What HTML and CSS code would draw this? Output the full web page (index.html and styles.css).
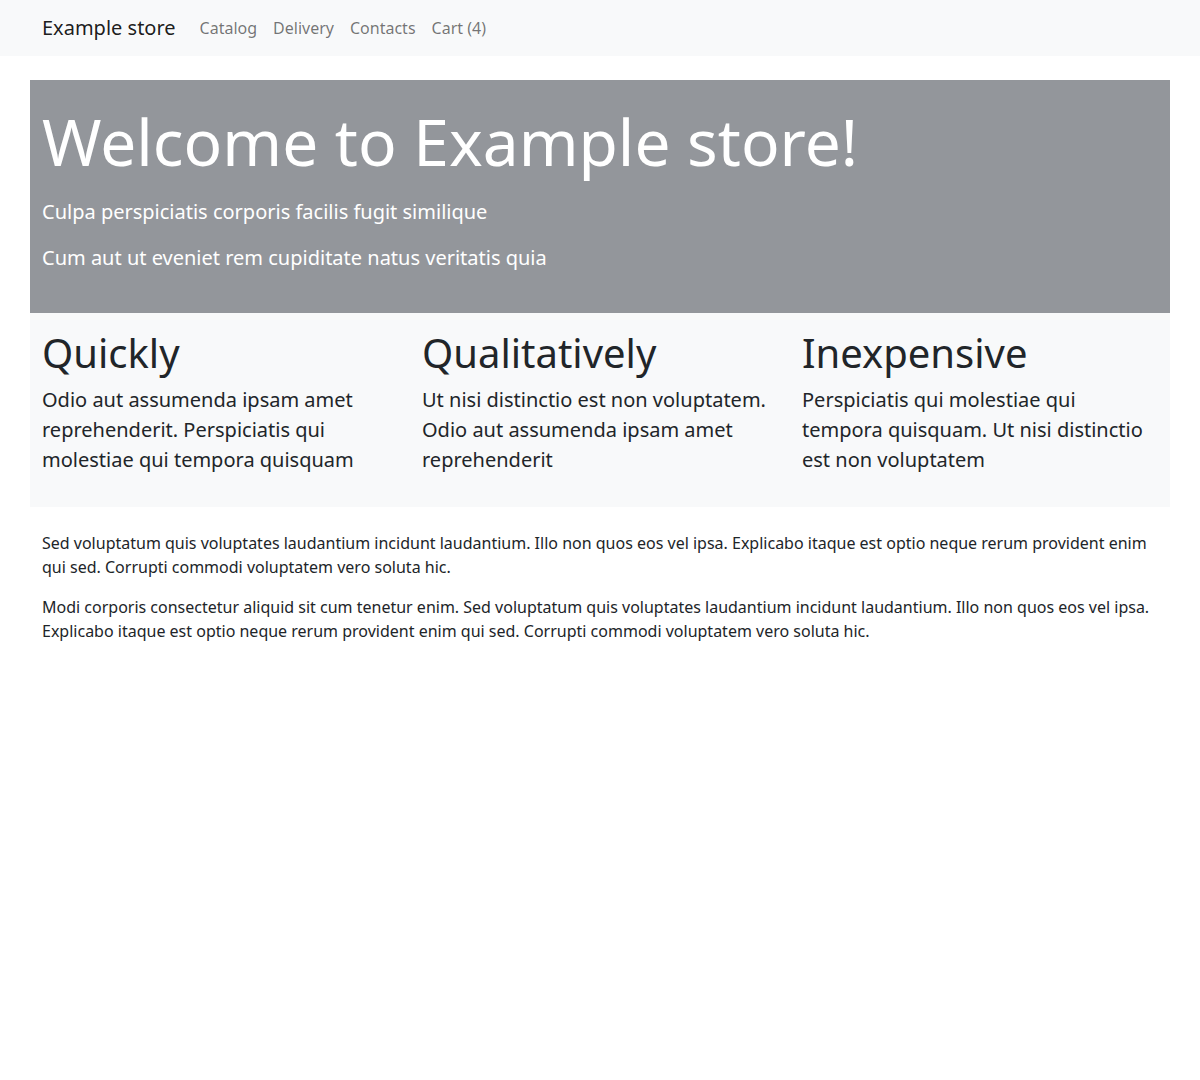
FILE: index.html
```html
<!DOCTYPE html>
<html lang="en">
<head>
<meta charset="utf-8">
<title>Example store</title>
<link rel="stylesheet" href="styles.css">
</head>
<body>
<nav class="navbar">
  <div class="container nav-inner">
    <a class="brand" href="#">Example store</a>
    <ul class="nav-links">
      <li><a href="#">Catalog</a></li>
      <li><a href="#">Delivery</a></li>
      <li><a href="#">Contacts</a></li>
      <li><a href="#">Cart (4)</a></li>
    </ul>
  </div>
</nav>
<main class="container main">
  <section class="hero">
    <h1 class="hero-title">Welcome to Example store!</h1>
    <p class="lead">Culpa perspiciatis corporis facilis fugit similique</p>
    <p class="lead">Cum aut ut eveniet rem cupiditate natus veritatis quia</p>
  </section>
  <section class="features">
    <div class="feature">
      <h2>Quickly</h2>
      <p>Odio aut assumenda ipsam amet reprehenderit. Perspiciatis qui molestiae qui tempora quisquam</p>
    </div>
    <div class="feature">
      <h2>Qualitatively</h2>
      <p>Ut nisi distinctio est non voluptatem. Odio aut assumenda ipsam amet reprehenderit</p>
    </div>
    <div class="feature">
      <h2>Inexpensive</h2>
      <p>Perspiciatis qui molestiae qui tempora quisquam. Ut nisi distinctio est non voluptatem</p>
    </div>
  </section>
  <section class="text">
    <p>Sed voluptatum quis voluptates laudantium incidunt laudantium. Illo non quos eos vel ipsa. Explicabo itaque est optio neque rerum provident enim qui sed. Corrupti commodi voluptatem vero soluta hic.</p>
    <p>Modi corporis consectetur aliquid sit cum tenetur enim. Sed voluptatum quis voluptates laudantium incidunt laudantium. Illo non quos eos vel ipsa. Explicabo itaque est optio neque rerum provident enim qui sed. Corrupti commodi voluptatem vero soluta hic.</p>
  </section>
</main>
</body>
</html>
```
FILE: styles.css
```css
* { box-sizing: border-box; }
body {
  margin: 0;
  font-family: "Noto Sans", "Open Sans", sans-serif;
  font-size: 16px;
  line-height: 1.5;
  color: #212529;
  background: #fff;
}
.container {
  width: 1140px;
  margin: 0 auto;
}
.navbar {
  background: #f8f9fa;
  padding: 8px 0;
}
.nav-inner {
  display: flex;
  align-items: center;
  padding: 0 12px;
}
.brand {
  font-size: 20px;
  color: rgba(0,0,0,0.9);
  text-decoration: none;
  padding: 5px 0;
  margin-right: 16px;
}
.nav-links {
  display: flex;
  list-style: none;
  margin: 0;
  padding: 0;
}
.nav-links a {
  display: block;
  padding: 8px;
  color: rgba(0,0,0,0.55);
  text-decoration: none;
}
.main { margin-top: 24px; }
.hero {
  background: #93969b;
  color: #fff;
  padding: 24px 12px;
}
.hero-title {
  font-size: 64px;
  font-weight: 400;
  line-height: 1.2;
  margin: 0 0 16px;
}
.lead {
  font-size: 20px;
  margin: 0 0 16px;
}
.features {
  background: #f8f9fa;
  display: grid;
  grid-template-columns: repeat(3, 1fr);
  padding: 16px 0;
}
.feature { padding: 0 12px; }
.feature h2 {
  font-size: 40px;
  font-weight: 400;
  line-height: 1.2;
  margin: 0 0 8px;
}
.feature p {
  font-size: 20px;
  margin: 0 0 16px;
}
.text { padding: 24px 12px; }
.text p { margin: 0 0 16px; }
```
